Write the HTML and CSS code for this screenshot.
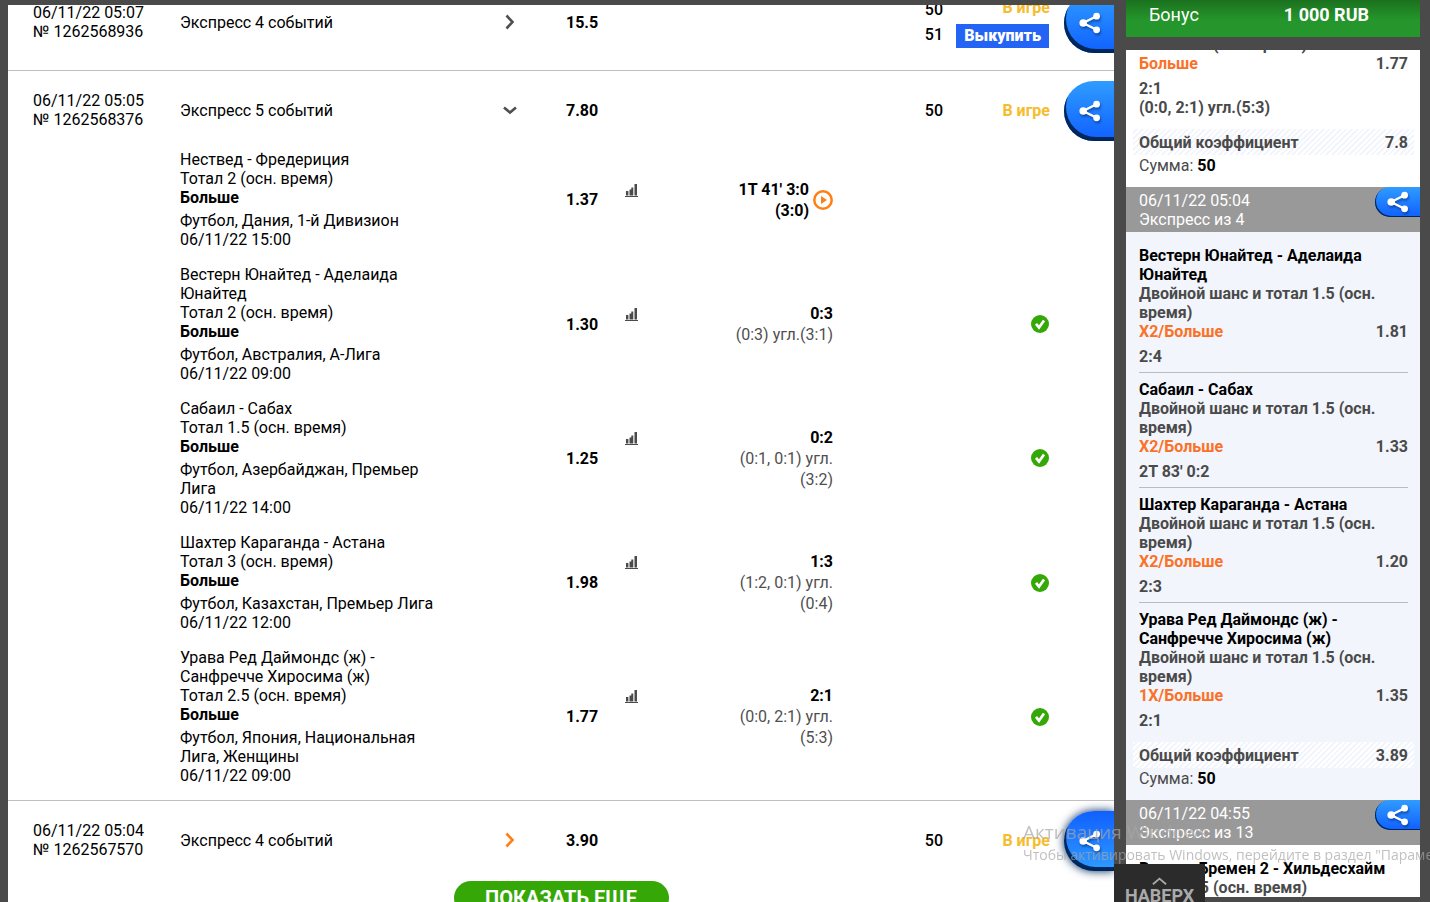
FILE: index.html
```
<!DOCTYPE html>
<html lang="ru">
<head>
<meta charset="utf-8">
<title>История ставок</title>
<link rel="stylesheet" href="styles.css">
</head>
<body>
<svg class="sprite" aria-hidden="true">
  <symbol id="share" viewBox="0 0 22 22">
    <path d="M4 11 18 4M4 11l14 7" fill="none" stroke="currentColor" stroke-width="2.4"/>
    <circle cx="4.2" cy="11" r="3.8" fill="currentColor"/><circle cx="17.6" cy="4.2" r="3.4" fill="currentColor"/><circle cx="17.6" cy="17.8" r="3.4" fill="currentColor"/>
  </symbol>
  <symbol id="right" viewBox="0 0 10 16"><path d="M1.5 1.5 7.500 8l-6 6.500" fill="none" stroke="currentColor" stroke-width="2.600"/></symbol>
  <symbol id="down" viewBox="0 0 14 9"><path d="M1 1.500 7 6.500l6-5" fill="none" stroke="currentColor" stroke-width="2.600"/></symbol>
  <symbol id="stat" viewBox="0 0 13 13"><path d="M0 12h13v1H0zM1 7h2.400v4.500H1zM4.500 5.500h2v6h-2zM6.300 3.500h2v8h-2zM9.500 0H12v11.500H9.500z" fill="#4a4a4a"/></symbol>
  <symbol id="play" viewBox="0 0 20 20"><circle cx="10" cy="10" r="8.700" fill="none" stroke="#ff7f15" stroke-width="2.500"/><path d="M8 6v8l6-4z" fill="#ff7f15"/></symbol>
  <symbol id="check" viewBox="0 0 18 18"><circle cx="9" cy="9" r="9" fill="#35a808"/><path d="m5 8.800 3 3.700L13 5.500" fill="none" stroke="#fff" stroke-width="2.700"/></symbol>
</svg>
<div class="page">
  <main class="history">
    <table class="bets">
      <colgroup><col class="c-date"><col><col class="c-arrow"><col class="c-odd"><col class="c-score"><col class="c-sum"><col class="c-status"><col class="c-share"></colgroup>
      <tbody class="bet tall">
        <tr class="head">
          <td class="date">06/11/22 05:07<br>№ 1262568936</td><td>Экспресс 4 событий</td>
          <td class="arrow"><button class="toggle" aria-label="Развернуть"><svg class="right"><use href="#right"/></svg></button></td>
          <td class="odd">15.5</td><td></td><td class="sum">50<br>51</td>
          <td class="status"><div class="stack"><span>В игре</span><button class="cashout">Выкупить</button></div></td>
          <td class="share-cell"><button class="share" aria-label="Поделиться"><svg><use href="#share"/></svg></button></td>
        </tr>
      </tbody>
      <tbody class="bet open">
        <tr class="head">
          <td class="date">06/11/22 05:05<br>№ 1262568376</td><td>Экспресс 5 событий</td>
          <td class="arrow"><button class="toggle" aria-label="Свернуть"><svg class="down"><use href="#down"/></svg></button></td>
          <td class="odd">7.80</td><td></td><td class="sum">50</td><td class="status">В игре</td>
          <td class="share-cell"><button class="share" aria-label="Поделиться"><svg><use href="#share"/></svg></button></td>
        </tr>
        <tr class="event">
          <td></td><td colspan="2" class="match"><p>Нествед - Фредериция<br>Тотал 2 (осн. время)<br><b>Больше</b></p><p>Футбол, Дания, 1-й Дивизион<br>06/11/22 15:00</p></td>
          <td class="odd">1.37</td>
          <td><div class="score"><svg class="stat"><use href="#stat"/></svg><div class="live"><div><b>1T 41' 3:0</b><br><b>(3:0)</b></div><svg class="play"><use href="#play"/></svg></div></div></td>
          <td></td><td></td><td></td>
        </tr>
        <tr class="event">
          <td></td><td colspan="2" class="match"><p>Вестерн Юнайтед - Аделаида Юнайтед<br>Тотал 2 (осн. время)<br><b>Больше</b></p><p>Футбол, Австралия, А-Лига<br>06/11/22 09:00</p></td>
          <td class="odd">1.30</td>
          <td><div class="score"><svg class="stat"><use href="#stat"/></svg><div><b>0:3</b><br>(0:3) угл.(3:1)</div></div></td>
          <td></td><td class="status"><svg class="check"><use href="#check"/></svg></td><td></td>
        </tr>
        <tr class="event">
          <td></td><td colspan="2" class="match"><p>Сабаил - Сабах<br>Тотал 1.5 (осн. время)<br><b>Больше</b></p><p>Футбол, Азербайджан, Премьер Лига<br>06/11/22 14:00</p></td>
          <td class="odd">1.25</td>
          <td><div class="score"><svg class="stat"><use href="#stat"/></svg><div><b>0:2</b><br>(0:1, 0:1) угл.<br>(3:2)</div></div></td>
          <td></td><td class="status"><svg class="check"><use href="#check"/></svg></td><td></td>
        </tr>
        <tr class="event">
          <td></td><td colspan="2" class="match"><p>Шахтер Караганда - Астана<br>Тотал 3 (осн. время)<br><b>Больше</b></p><p>Футбол, Казахстан, Премьер Лига<br>06/11/22 12:00</p></td>
          <td class="odd">1.98</td>
          <td><div class="score"><svg class="stat"><use href="#stat"/></svg><div><b>1:3</b><br>(1:2, 0:1) угл.<br>(0:4)</div></div></td>
          <td></td><td class="status"><svg class="check"><use href="#check"/></svg></td><td></td>
        </tr>
        <tr class="event">
          <td></td><td colspan="2" class="match"><p>Урава Ред Даймондс (ж) - Санфречче Хиросима (ж)<br>Тотал 2.5 (осн. время)<br><b>Больше</b></p><p>Футбол, Япония, Национальная Лига, Женщины<br>06/11/22 09:00</p></td>
          <td class="odd">1.77</td>
          <td><div class="score"><svg class="stat"><use href="#stat"/></svg><div><b>2:1</b><br>(0:0, 2:1) угл.<br>(5:3)</div></div></td>
          <td></td><td class="status"><svg class="check"><use href="#check"/></svg></td><td></td>
        </tr>
      </tbody>
      <tbody class="bet">
        <tr class="head">
          <td class="date">06/11/22 05:04<br>№ 1262567570</td><td>Экспресс 4 событий</td>
          <td class="arrow"><button class="toggle active" aria-label="Развернуть"><svg class="right"><use href="#right"/></svg></button></td>
          <td class="odd">3.90</td><td></td><td class="sum">50</td><td class="status">В игре</td>
          <td class="share-cell"><button class="share hovered" aria-label="Поделиться"><svg><use href="#share"/></svg></button></td>
        </tr>
      </tbody>
    </table>
    <button class="more">ПОКАЗАТЬ ЕЩЕ</button>
  </main>
  <aside class="side">
    <div class="bonus"><span>Бонус</span><b>1 000 RUB</b></div>
    <div class="coupons">
      <section class="coupon first">
        <article><p>Тотал 2.5 (осн. время)</p><p class="pick"><span>Больше</span><span>1.77</span></p><p class="result">2:1<br>(0:0, 2:1) угл.(5:3)</p></article>
        <p class="total"><span>Общий коэффициент</span><span>7.8</span></p>
        <p class="amount">Сумма: <b>50</b></p>
      </section>
      <header class="bar"><div>06/11/22 05:04<br>Экспресс из 4</div><button class="share small" aria-label="Поделиться"><svg><use href="#share"/></svg></button></header>
      <section class="coupon tinted">
        <article><h3>Вестерн Юнайтед - Аделаида Юнайтед</h3><p>Двойной шанс и тотал 1.5 (осн. время)</p><p class="pick"><span>Х2/Больше</span><span>1.81</span></p><p class="result">2:4</p></article>
        <article><h3>Сабаил - Сабах</h3><p>Двойной шанс и тотал 1.5 (осн. время)</p><p class="pick"><span>Х2/Больше</span><span>1.33</span></p><p class="result">2T 83' 0:2</p></article>
        <article><h3>Шахтер Караганда - Астана</h3><p>Двойной шанс и тотал 1.5 (осн. время)</p><p class="pick"><span>Х2/Больше</span><span>1.20</span></p><p class="result">2:3</p></article>
        <article><h3>Урава Ред Даймондс (ж) - Санфречче Хиросима (ж)</h3><p>Двойной шанс и тотал 1.5 (осн. время)</p><p class="pick"><span>1Х/Больше</span><span>1.35</span></p><p class="result">2:1</p></article>
        <p class="total"><span>Общий коэффициент</span><span>3.89</span></p>
        <p class="amount">Сумма: <b>50</b></p>
      </section>
      <header class="bar"><div>06/11/22 04:55<br>Экспресс из 13</div><button class="share small" aria-label="Поделиться"><svg><use href="#share"/></svg></button></header>
      <section class="coupon">
        <article><h3>Вердер Бремен 2 - Хильдесхайм</h3><p>Тотал 2.5 (осн. время)</p></article>
      </section>
    </div>
  </aside>
</div>
<button class="to-top"><svg viewBox="0 0 16 8"><path d="m1 7.500 7-6 7 6" fill="none" stroke="currentColor" stroke-width="2"/></svg>НАВЕРХ</button>
<div class="activation"><strong>Активация Windows</strong><span>Чтобы активировать Windows, перейдите в раздел "Параметры".</span></div>
</body>
</html>
```
FILE: styles.css
```
* { box-sizing: border-box; }
body { margin: 0; background: #4a4a4a; color: #000; font: 16px/19px Roboto, "Liberation Sans", sans-serif; overflow: hidden; }
p, h3 { margin: 0; font: inherit; }
b { font-weight: 700; }
button { border: 0; padding: 0; font: inherit; color: inherit; background: none; cursor: pointer; }
svg { display: block; }
.sprite { display: none; }
.page { display: flex; gap: 12px; height: 100vh; padding: 0 10px 0 8px; }

.history { flex: 1; min-width: 0; margin-top: 5px; background: #fff; overflow: hidden; }
.bets { width: 100%; margin-top: -22px; table-layout: fixed; border-collapse: collapse; }
.c-date { width: 172px; }
.c-arrow { width: 111px; }
.c-odd { width: 59px; }
.c-score { width: 208px; }
.c-sum { width: 110px; }
.c-status { width: 107px; }
.c-share { width: 64px; }
.bet + .bet { border-top: 1px solid #bfbfbf; }
td { padding: 0; vertical-align: middle; }
.head td { height: 80px; padding: 8px 0 10px; }
.tall .head td { padding-bottom: 17px; }
.open .head td { height: 71px; padding-bottom: 1px; }
.head .share-cell { padding-top: 10px; }
.head .date { padding-left: 25px; }
.toggle { display: block; width: 24px; margin: 0 auto; color: #4f4f4f; }
.toggle.active { color: #ff7f15; }
.bet .arrow { padding-right: 2px; }
.right { width: 10px; height: 16px; margin: 0 auto; }
.down { width: 14px; height: 9px; margin: 0 auto; }
.odd { font-weight: 700; }
.sum { font-weight: 500; line-height: 25px; text-align: right; }
.status { font-weight: 700; color: #f6bc2c; text-align: right; }
.stack { display: flex; flex-direction: column; align-items: flex-end; gap: 4px; line-height: 24px; }
.cashout { height: 24px; margin-right: 1px; padding: 0 8px; background: #2364f4; color: #fff; font-weight: 900; }
.share { display: flex; align-items: center; width: 50px; height: 60px; margin-left: auto; padding-left: 15px; border-radius: 30px 0 0 30px; color: #fff; background: linear-gradient(#2f9cff, #1060ff); box-shadow: inset 2px -4px 0 #00275a; }
.share svg { width: 22px; height: 22px; filter: drop-shadow(1px 2px 1px rgba(0, 30, 90, .5)); }
.share.hovered { background: linear-gradient(#1060ff, #2f9cff); box-shadow: inset 2px -4px 0 #00275a, 0 0 10px #00275a; }
.share.small { width: 45px; height: 30px; padding-left: 12px; box-shadow: inset 1px -1px 0 #00275a; }
.event td { padding: 8px 0; }
.bet .match { padding-right: 120px; }
.match p + p { margin-top: 4px; }
.event:last-child td { padding-bottom: 15px; }
.score { display: flex; justify-content: space-between; line-height: 21px; text-align: right; color: #4f4f4f; }
.score b { color: #000; }
.stat { width: 13px; height: 13px; margin-top: 5px; }
.live { display: flex; align-items: center; gap: 4px; }
.play { width: 20px; height: 20px; }
.check { width: 18px; height: 18px; margin-left: auto; margin-right: 1px; }
.more { display: block; width: 215px; height: 34px; margin: 0 auto; border-radius: 17px; background: #35a808; color: #fff; font-size: 20px; font-weight: 700; }

.side { display: flex; flex-direction: column; gap: 13px; width: 294px; padding-bottom: 5px; }
.bonus { display: flex; justify-content: space-between; flex: none; height: 37px; padding: 4px 51px 0 23px; background: linear-gradient(#1c711f, #24962b 20px); color: #fff; font-size: 18px; line-height: 22px; }
.coupons { flex: 1; min-height: 0; overflow: hidden; background: #fff; color: #4a4a4a; font-weight: 700; }
.coupon { padding: 14px 6px 12px 7px; }
.coupon.first { margin-top: -29px; }
.tinted { background: #f2f5fb; }
article { margin: 0 6px; }
article + article { margin-top: 6px; padding-top: 7px; border-top: 1px solid #bcbcbc; }
h3 { color: #000; }
.pick, .total { display: flex; justify-content: space-between; }
.pick span:first-child { color: #fb7127; }
.result { margin-top: 6px; }
.total { margin-top: 12px; padding: 4px 6px 3px; background: repeating-linear-gradient(135deg, #fff 0 2px, #f2f5fb 2px 4px); }
.amount { margin-top: 1px; padding: 0 6px; font-weight: 400; }
.amount b { color: #000; }
.bar { display: flex; justify-content: space-between; padding: 4px 0 3px 13px; background: #999; color: #fff; font-weight: 400; }
.bar .share { margin-top: -4px; }

.to-top { position: fixed; left: 1114px; bottom: 0; display: flex; flex-direction: column; align-items: center; width: 91px; height: 38px; padding-top: 13px; overflow: hidden; background: #2b2b2b; color: #aaa; font-size: 18px; line-height: 21px; font-weight: 700; }
.to-top svg { flex: none; width: 15px; height: 8px; }
.activation { position: fixed; left: 1023px; top: 819px; display: flex; flex-direction: column; white-space: nowrap; color: rgba(165, 165, 165, .7); font-family: "Open Sans", "Noto Sans", sans-serif; font-size: 14px; pointer-events: none; }
.activation strong { font-size: 19px; line-height: 26px; font-weight: 400; }
```
